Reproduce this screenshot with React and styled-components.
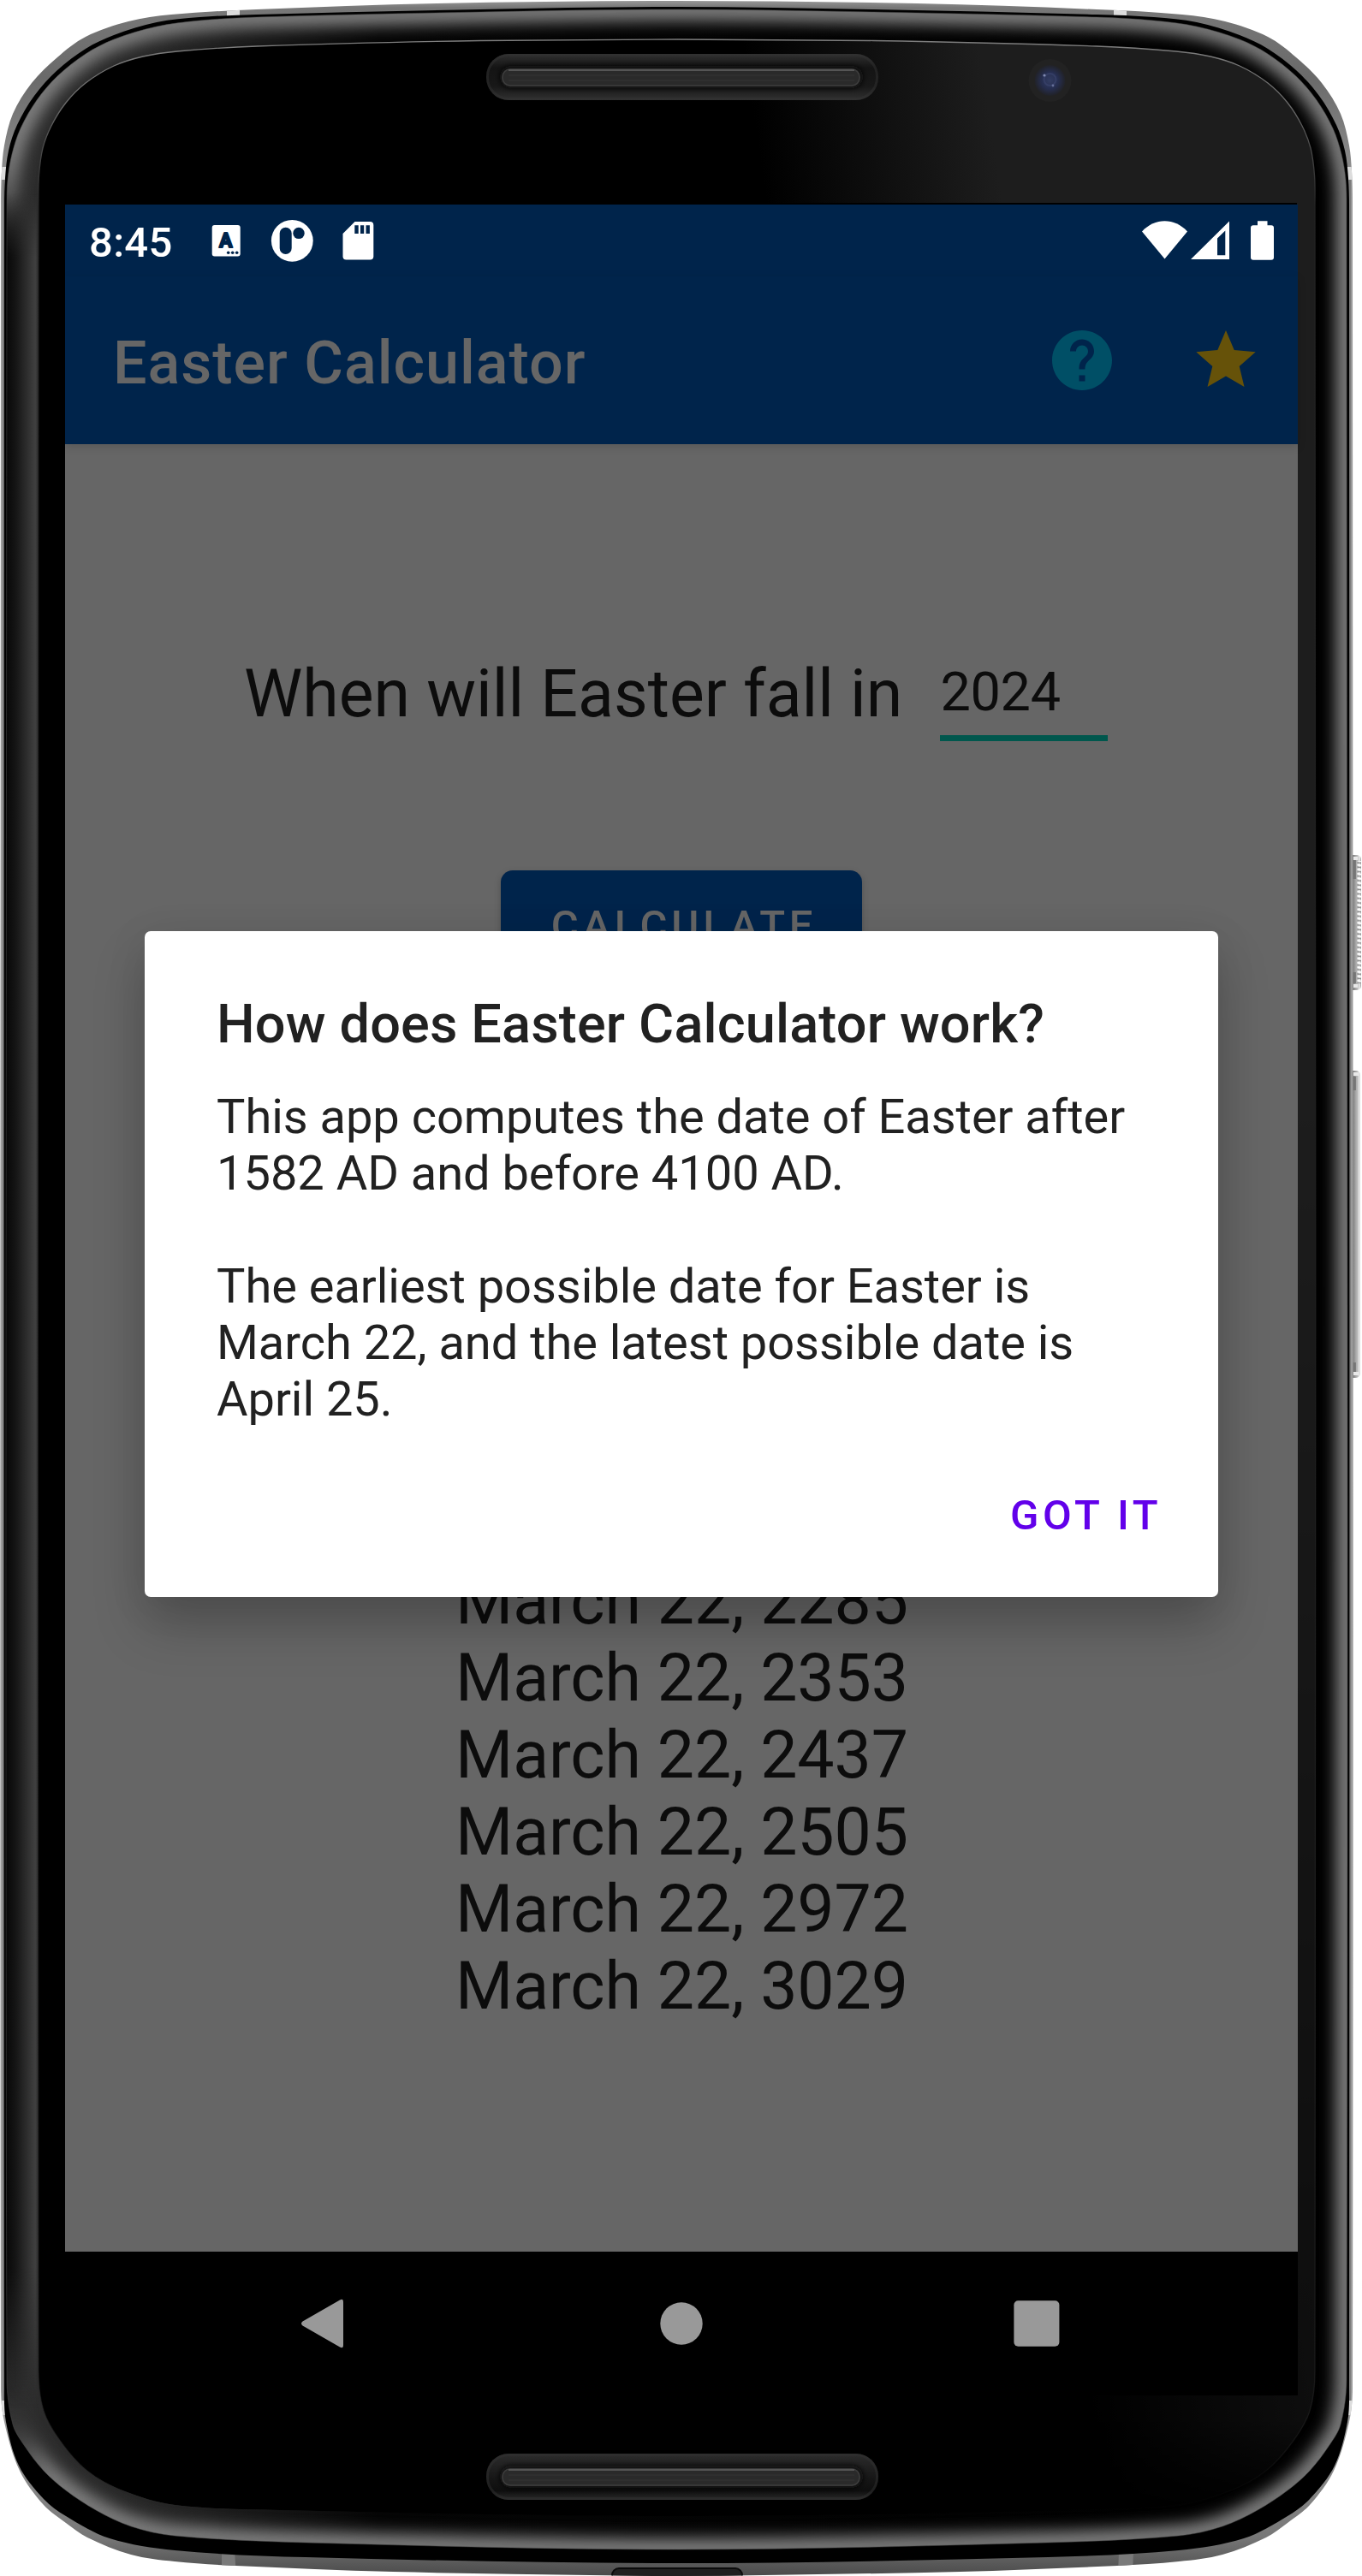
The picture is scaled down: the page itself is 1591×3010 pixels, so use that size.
import React from "react";
import styled, { createGlobalStyle } from "styled-components";

const GlobalStyle = createGlobalStyle`
  html, body { margin: 0; padding: 0; background: #fff; overflow: hidden; }
  * { box-sizing: border-box; }
`;

const Device = styled.div`
  position: relative;
  width: 1591px;
  height: 3010px;
  padding: 239px 75px 211px 76px;
  overflow: hidden;
  font-family: Roboto, "Liberation Sans", sans-serif;
`;

const Casing = styled.svg`
  position: absolute;
  inset: 0;
  display: block;
`;

const Screen = styled.div`
  position: relative;
  width: 1440px;
  height: 2560px;
  display: flex;
  flex-direction: column;
  background: #666;
`;

const StatusBar = styled.header`
  height: 84px;
  flex: none;
  display: flex;
  align-items: center;
  justify-content: space-between;
  background: #00244b;
  padding: 0 28px 0 27px;
`;

const StatusGroup = styled.div`
  display: flex;
  align-items: center;
  height: 84px;
`;

const Clock = styled.time`
  width: 144px;
  padding: 5px 0 0 1px;
  font-size: 49px;
  font-weight: 500;
  line-height: 58px;
  letter-spacing: 0.3px;
  color: #fff;
`;

const StatusIcon = styled.svg`
  display: block;
  flex: none;
  margin-left: ${(p) => p.$gap || 0}px;
`;

const AppBar = styled.div`
  height: 196px;
  flex: none;
  display: flex;
  align-items: center;
  justify-content: space-between;
  padding: 0 42px 0 56px;
  background: #00244b;
  box-shadow: 0 3px 10px rgba(0, 0, 0, 0.14);
`;

const AppTitle = styled.h1`
  margin: 0;
  padding-top: 5px;
  font-size: 70px;
  font-weight: 500;
  line-height: 82px;
  letter-spacing: 1px;
  color: #666;
`;

const Actions = styled.div`
  display: flex;
  gap: 84px;
`;

const ActionIcon = styled.svg`
  display: block;
  width: 84px;
  height: 84px;
  fill: ${(p) => p.$color};
`;

const Content = styled.main`
  flex: 1;
  display: flex;
  flex-direction: column;
  align-items: center;
  min-height: 0;
`;

const Question = styled.div`
  align-self: flex-start;
  display: flex;
  align-items: flex-start;
  gap: 44px;
  margin: 246px 0 0 209px;
`;

const Prompt = styled.span`
  padding-top: 1px;
  font-size: 77px;
  line-height: 90px;
  color: #0c0c0c;
  white-space: nowrap;
`;

const YearField = styled.span`
  display: block;
  width: 196px;
  height: 101px;
  padding-top: 7px;
  border-bottom: 7px solid #00574d;
  font-size: 63px;
  line-height: 74px;
  letter-spacing: -0.3px;
  color: #0c0c0c;
`;

const CalculateButton = styled.button`
  width: 422px;
  height: 126px;
  flex: none;
  margin-top: 151px;
  padding: 3px 0 0 6px;
  border: 0;
  border-radius: 14px;
  background: #00244b;
  box-shadow: 0 3px 8px rgba(0, 0, 0, 0.2);
  color: #666;
  font: 500 49px/58px Roboto, sans-serif;
  letter-spacing: 4.8px;
`;

const Dates = styled.ol`
  list-style: none;
  margin: 683px 0 0;
  padding: 0 0 0 1px;
  font-size: 77px;
  line-height: 90px;
  letter-spacing: -0.1px;
  color: #0c0c0c;
  text-align: center;
`;

const NavBar = styled.nav`
  height: 168px;
  flex: none;
  display: flex;
  align-items: center;
  justify-content: center;
  background: #000;
`;

const NavButton = styled.div`
  width: 415px;
  display: flex;
  justify-content: center;
`;

const NavIcon = styled.svg`
  display: block;
  width: 84px;
  height: 84px;
  fill: #999;
`;

const Dialog = styled.section`
  position: absolute;
  left: 93px;
  top: 849px;
  width: 1254px;
  height: 778px;
  display: flex;
  flex-direction: column;
  padding: 72px 66px 0 84px;
  border-radius: 7px;
  background: #fff;
  box-shadow: 0 34px 60px rgba(0, 0, 0, 0.22), 0 8px 50px rgba(0, 0, 0, 0.08);
  color: #212121;
`;

const DialogTitle = styled.h2`
  margin: 0;
  font-size: 63px;
  font-weight: 500;
  line-height: 74px;
  letter-spacing: 0.16px;
`;

const DialogText = styled.div`
  margin-top: 38px;
`;

const DialogBody = styled.p`
  margin: 0 0 66px;
  font-size: 56px;
  line-height: 66px;
  letter-spacing: -0.03px;
  white-space: nowrap;
`;

const DialogAction = styled.button`
  align-self: flex-end;
  margin: 8px 0 0;
  padding: 0;
  border: 0;
  background: none;
  color: #6200ea;
  font: 500 49px/58px Roboto, sans-serif;
  letter-spacing: 4.5px;
`;

const WIDTH = 1581;

const outline = (half) => {
  const right = half.slice(1, -1).map(([x, y]) => [WIDTH - x, y]).reverse();
  const pts = [...half, ...right];
  const n = pts.length;
  const dir = (i) => {
    const a = pts[(i + n - 1) % n];
    const b = pts[(i + 1) % n];
    const l = Math.hypot(b[0] - a[0], b[1] - a[1]);
    return [(b[0] - a[0]) / l, (b[1] - a[1]) / l];
  };
  let d = `M${pts[0][0]} ${pts[0][1]}`;
  for (let i = 0; i < n; i++) {
    const p = pts[i];
    const q = pts[(i + 1) % n];
    const len = Math.hypot(q[0] - p[0], q[1] - p[1]) / 3;
    const u = dir(i);
    const v = dir((i + 1) % n);
    d += `C${(p[0] + u[0] * len).toFixed(1)} ${(p[1] + u[1] * len).toFixed(1)} ${(q[0] - v[0] * len).toFixed(1)} ${(q[1] - v[1] * len).toFixed(1)} ${q[0]} ${q[1]}`;
  }
  return d + "Z";
};

const RIM = outline([
  [790.5, 1], [510, 4], [300, 11], [200, 17], [150, 25], [100, 43], [67, 67], [37, 97], [15, 133], [5, 170], [2, 200], [1, 240],
  [1, 2790], [5, 2830], [23, 2887], [51, 2927], [77, 2948], [102, 2965], [153, 2985], [204, 2993], [276, 2998], [459, 3005], [689, 3009], [790.5, 3010],
]);
const SEAM = outline([
  [790.5, 8], [561, 11], [300, 17], [233, 20], [183, 26], [133, 41], [100, 57], [67, 82], [40, 112], [20, 146], [10, 176], [6, 208], [5, 240],
  [5, 2790], [7, 2830], [22, 2881], [51, 2920], [77, 2940], [128, 2966], [204, 2980], [357, 2988], [790.5, 2995],
]);
const BEZEL = outline([
  [790.5, 11], [561, 14], [300, 20], [233, 24], [183, 31], [133, 46], [100, 63], [67, 89], [43, 117], [24, 150], [14, 180], [9, 210], [8, 240],
  [8, 2780], [15, 2833], [28, 2857], [51, 2887], [77, 2910], [112, 2933], [153, 2952], [204, 2963], [357, 2971], [790.5, 2979],
]);
const GLASS = outline([
  [790.5, 46], [561, 47.5], [300, 54], [207, 60], [167, 66], [133, 77], [100, 97], [77, 120], [60, 147], [50, 173], [45.5, 205], [45, 240],
  [45, 2770], [51, 2817], [71, 2853], [102, 2887], [143, 2910], [204, 2927], [327, 2933], [790.5, 2940],
]);

function Speaker({ y, flip }) {
  return (
    <g transform={`translate(568 ${y})`}>
      <rect width="458" height="54" rx="26" fill={flip ? "url(#grilleLow)" : "url(#grille)"} />
      <rect x="1.5" y="1.5" width="455" height="51" rx="25" fill="none" stroke="#333" strokeWidth="3" opacity=".45" />
      <rect x="16" y="14" width="424" height="26" rx="13" fill="#0c0c0c" filter="url(#soft3)" />
      <rect x="18" y="17" width="419" height="21" rx="10" fill="#2a2a2a" />
      <rect x="19" y="18" width="417" height="19" rx="9" fill="none" stroke="#3c3c3c" strokeWidth="1.5" />
      <path d="M26 19H430" stroke="#555" strokeWidth="2" />
      <path d="M26 25H430M26 31H430" stroke="#343434" strokeWidth="1" />
    </g>
  );
}

function PhoneCasing() {
  return (
    <Casing width="1591" height="3010" viewBox="0 0 1591 3010" aria-hidden="true">
      <defs>
        <linearGradient id="rim" gradientUnits="userSpaceOnUse" x1="0" y1="0" x2="0" y2="3010">
          <stop offset="0" stopColor="#9a9a9a" />
          <stop offset=".003" stopColor="#777" />
          <stop offset=".03" stopColor="#6a6a6a" />
          <stop offset=".08" stopColor="#9a9a9a" />
          <stop offset=".94" stopColor="#9a9a9a" />
          <stop offset=".985" stopColor="#777" />
          <stop offset="1" stopColor="#4a4a4a" />
        </linearGradient>
        <linearGradient id="bezelBase" gradientUnits="userSpaceOnUse" x1="0" y1="0" x2="1581" y2="0">
          <stop offset="0" stopColor="#2e2e2e" />
          <stop offset=".12" stopColor="#262626" />
          <stop offset=".28" stopColor="#050505" />
          <stop offset="1" stopColor="#000" />
        </linearGradient>
        <linearGradient id="leftWall" gradientUnits="userSpaceOnUse" x1="8" y1="0" x2="45" y2="0">
          <stop offset="0" stopColor="#080808" />
          <stop offset=".3" stopColor="#161616" />
          <stop offset=".9" stopColor="#404040" />
          <stop offset="1" stopColor="#2c2c2c" />
        </linearGradient>
        <linearGradient id="wallFade" gradientUnits="userSpaceOnUse" x1="0" y1="0" x2="0" y2="3010">
          <stop offset=".075" stopColor="#000" />
          <stop offset=".1" stopColor="#fff" />
          <stop offset=".88" stopColor="#fff" />
          <stop offset=".935" stopColor="#000" />
        </linearGradient>
        <linearGradient id="glossX" gradientUnits="userSpaceOnUse" x1="860" y1="0" x2="1130" y2="-40">
          <stop offset="0" stopColor="#1d1d1d" stopOpacity="0" />
          <stop offset="1" stopColor="#1d1d1d" />
        </linearGradient>
        <linearGradient id="glossFade" gradientUnits="userSpaceOnUse" x1="0" y1="0" x2="0" y2="3010">
          <stop offset="0" stopColor="#fff" />
          <stop offset=".42" stopColor="#fff" />
          <stop offset=".85" stopColor="#888" />
          <stop offset=".94" stopColor="#808080" />
          <stop offset=".975" stopColor="#000" />
        </linearGradient>
        <linearGradient id="edgeFade" gradientUnits="userSpaceOnUse" x1="0" y1="0" x2="0" y2="3010">
          <stop offset="0" stopColor="#8a8a8a" />
          <stop offset=".04" stopColor="#6a6a6a" />
          <stop offset=".08" stopColor="#222" />
          <stop offset=".94" stopColor="#222" stopOpacity=".6" />
          <stop offset=".975" stopColor="#222" stopOpacity="0" />
        </linearGradient>
        <linearGradient id="grille" x1="0" y1="0" x2="0" y2="1">
          <stop offset="0" stopColor="#303030" />
          <stop offset=".3" stopColor="#141414" />
          <stop offset=".7" stopColor="#181818" />
          <stop offset="1" stopColor="#303030" />
        </linearGradient>
        <linearGradient id="grilleLow" x1="0" y1="0" x2="0" y2="1">
          <stop offset="0" stopColor="#2c2c2c" />
          <stop offset=".6" stopColor="#141414" />
          <stop offset=".8" stopColor="#0e0e0e" />
          <stop offset="1" stopColor="#2a2a2a" />
        </linearGradient>
        <linearGradient id="sideKey" gradientUnits="userSpaceOnUse" x1="1580" y1="0" x2="1590" y2="0">
          <stop offset="0" stopColor="#767676" />
          <stop offset=".35" stopColor="#a4a4a4" />
          <stop offset=".6" stopColor="#bdbdbd" />
          <stop offset=".8" stopColor="#f0f0f0" />
          <stop offset="1" stopColor="#a0a0a0" />
        </linearGradient>
        <radialGradient id="lens">
          <stop offset="0" stopColor="#333d63" />
          <stop offset=".55" stopColor="#262e50" />
          <stop offset="1" stopColor="#212227" />
        </radialGradient>
        <pattern id="knurl" width="10" height="5.2" patternUnits="userSpaceOnUse">
          <path d="M0 1L10 2.5" stroke="#fff" strokeWidth="2" />
          <path d="M0 3.6L10 5" stroke="#8c8c8c" strokeWidth="1.4" />
        </pattern>
        <filter id="soft" filterUnits="userSpaceOnUse" x="-40" y="-40" width="1680" height="3100">
          <feGaussianBlur stdDeviation="9" />
        </filter>
        <filter id="soft3" filterUnits="userSpaceOnUse" x="-20" y="-20" width="500" height="100">
          <feGaussianBlur stdDeviation="3" />
        </filter>
        <filter id="softMask" filterUnits="userSpaceOnUse" x="-200" y="-100" width="1900" height="3200">
          <feGaussianBlur stdDeviation="14 34" />
        </filter>
        <clipPath id="bezelClip"><path d={BEZEL} /></clipPath>
        <clipPath id="rimClip"><path d={RIM} /></clipPath>
        <clipPath id="glassClip"><path d={GLASS} /></clipPath>
        <mask id="noLeft" maskUnits="userSpaceOnUse" x="0" y="0" width="1591" height="3010">
          <rect width="1591" height="3010" fill="#fff" />
          <rect x="-100" y="230" width="150" height="2640" fill="#000" filter="url(#softMask)" />
        </mask>
        <mask id="wallMask" maskUnits="userSpaceOnUse" x="0" y="0" width="60" height="3010">
          <rect width="60" height="3010" fill="url(#wallFade)" />
        </mask>
        <mask id="glossMask" maskUnits="userSpaceOnUse" x="0" y="0" width="1591" height="3010">
          <rect width="1591" height="3010" fill="url(#glossFade)" />
        </mask>
      </defs>

      <g>
        <rect x="1575" y="999" width="15" height="158" rx="5" fill="url(#sideKey)" />
        <rect x="1585.5" y="1006" width="4.500" height="144" fill="url(#knurl)" />
        <rect x="1575" y="1251" width="14" height="359" rx="5" fill="url(#sideKey)" />
        <path d="M1581 1001h5v4h-5zM1581 1150h5v4h-5zM1581 1253h6v4h-6zM1581 1603h6v4h-6z" fill="#e8e8e8" />
        <path d="M1580 1005h4v22h-4zM1580 1136h4v13h-4zM1580 1258h4v16h-4zM1580 1592h4v11h-4z" fill="#6a6a6a" opacity=".7" />
      </g>

      <path d={RIM} fill="url(#rim)" />
      <g clipPath="url(#rimClip)">
        <path d="M4 210V2805M1577 210V2805" stroke="#7c7c7c" strokeWidth="2" />
        <path d="M265 0h15v26h-15zM1301 0h15v26h-15zM0 195h8v15H0zM1573 195h8v15h-8zM0 2805h8v17H0zM1573 2805h8v17h-8z" fill="#dcdcdc" />
        <path d="M259 2980h15l2 30h-17zM1307 2980h17l-1 30h-17z" fill="#7a7a7a" />
        <rect x="715" y="3001" width="152" height="20" rx="8" fill="#202020" stroke="#0a0a0a" strokeWidth="2" />
      </g>
      <path d={SEAM} fill="#000" />

      <path d={BEZEL} fill="url(#bezelBase)" />
      <g clipPath="url(#bezelClip)">
        <g mask="url(#noLeft)">
          <path d={BEZEL} fill="none" stroke="#808080" strokeWidth="26" filter="url(#soft)" />
        </g>
        <rect x="6" y="200" width="40" height="2650" fill="url(#leftWall)" mask="url(#wallMask)" />
      </g>
      <path d={BEZEL} fill="none" stroke="#4a4a4a" strokeWidth="1" opacity=".5" />

      <g clipPath="url(#glassClip)">
        <path d={GLASS} fill="#000" />
        <rect x="780" y="0" width="811" height="3010" fill="url(#glossX)" mask="url(#glossMask)" />
      </g>
      <path d={GLASS} fill="none" stroke="url(#edgeFade)" strokeWidth="1.3" />

      <Speaker y={63} />
      <Speaker y={2867} flip />

      <g>
        <circle cx="1226.5" cy="94" r="25" fill="#222" />
        <circle cx="1226.5" cy="94" r="18" fill="url(#lens)" />
        <circle cx="1226.5" cy="93" r="7" fill="none" stroke="#46507c" strokeWidth="2" opacity=".4" />
        <circle cx="1220" cy="88" r="1.6" fill="#8089b0" />
        <circle cx="1230" cy="100" r="1.4" fill="#656f98" />
      </g>
      <path d="M791 238H1515" stroke="#000" strokeWidth="2" />
    </Casing>
  );
}

function KeyboardIcon() {
  return (
    <StatusIcon width="34" height="84" viewBox="0 0 34 84">
      <rect x=".7" y="24" width="33" height="36.5" rx="3" fill="#fff" />
      <text x="16.7" y="50" textAnchor="middle" fontFamily="Roboto" fontWeight="700" fontSize="23" fill="#00244b" stroke="#00244b" strokeWidth="2" strokeLinejoin="round">A</text>
      <g fill="#00244b">
        <circle cx="19.7" cy="56.3" r="1.8" />
        <circle cx="24.7" cy="56.3" r="1.8" />
        <circle cx="29.7" cy="56.3" r="1.8" />
      </g>
    </StatusIcon>
  );
}

function BadgeIcon() {
  return (
    <StatusIcon $gap={35} width="50" height="84" viewBox="316 239 50 84">
      <circle cx="341.3" cy="281.3" r="24.4" fill="#fff" />
      <rect x="326.7" y="265.7" width="14" height="31.3" rx="7" fill="#00244b" />
      <circle cx="349" cy="272.4" r="6.7" fill="#00244b" />
    </StatusIcon>
  );
}

function CardIcon() {
  return (
    <StatusIcon $gap={34} width="37" height="84" viewBox="400 239 37 84">
      <path d="M414.5 259H432.3a4 4 0 0 1 4 4V299.5a4 4 0 0 1-4 4H404.5a4 4 0 0 1-4-4V273z" fill="#fff" />
      <path d="M414.3 263.3h4.4v9.7h-4.4zM421 263.3h4.2v9.7H421zM427.5 263.3h4.4v9.7h-4.4z" fill="#00244b" />
    </StatusIcon>
  );
}

function SystemIcons() {
  return (
    <StatusIcon width="154" height="84" viewBox="1334 239 154 84" fill="#fff">
      <path d="M1334 270.5C1349 254.2 1372 254.2 1387 270.5L1360.5 302.5z" />
      <path fillRule="evenodd" d="M1391 303L1436 258.5V303zM1422 298.3h9.3V269.5L1422 278.5z" />
      <path d="M1469 258.3h11.5v5H1485a3 3 0 0 1 3 3v34.5a3 3 0 0 1-3 3h-21a3 3 0 0 1-3-3v-34.5a3 3 0 0 1 3-3h5z" />
    </StatusIcon>
  );
}

const dates = ["March 22, 2285", "March 22, 2353", "March 22, 2437", "March 22, 2505", "March 22, 2972", "March 22, 3029"];

export default function App() {
  return (
    <>
      <GlobalStyle />
      <Device>
        <PhoneCasing />
        <Screen>
          <StatusBar>
            <StatusGroup>
              <Clock>8:45</Clock>
              <KeyboardIcon />
              <BadgeIcon />
              <CardIcon />
            </StatusGroup>
            <SystemIcons />
          </StatusBar>
          <AppBar>
            <AppTitle>Easter Calculator</AppTitle>
            <Actions>
              <ActionIcon $color="#004f66" viewBox="0 0 24 24">
                <path d="M12 2C6.48 2 2 6.48 2 12s4.48 10 10 10 10-4.48 10-10S17.52 2 12 2zm1 17h-2v-2h2v2zm2.07-7.75l-.9.92C13.45 12.9 13 13.5 13 15h-2v-.5c0-1.1.45-2.1 1.17-2.83l1.24-1.26c.37-.36.59-.86.59-1.41 0-1.1-.9-2-2-2s-2 .9-2 2H8c0-2.21 1.79-4 4-4s4 1.79 4 4c0 .88-.36 1.68-.93 2.25z" />
              </ActionIcon>
              <ActionIcon $color="#665209" viewBox="1390 379 84 84">
                <path d="M1432 386L1441.7 409L1466.7 411.3L1447.7 428L1453.5 452L1432 439.5L1410.5 452L1416.3 428L1397.3 411.3L1422.3 409z" />
              </ActionIcon>
            </Actions>
          </AppBar>
          <Content>
            <Question>
              <Prompt>When will Easter fall in</Prompt>
              <YearField>2024</YearField>
            </Question>
            <CalculateButton>CALCULATE</CalculateButton>
            <Dates>
              {dates.map((d) => <li key={d}>{d}</li>)}
            </Dates>
          </Content>
          <NavBar>
            <NavButton>
              <NavIcon viewBox="339 2673 84 84">
                <path d="M397 2687.5Q401 2685 401 2690V2740Q401 2745 397 2742.5L353.5 2717.5Q350.5 2715 353.5 2712.5z" />
              </NavIcon>
            </NavButton>
            <NavButton>
              <NavIcon viewBox="0 0 84 84"><circle cx="42" cy="42" r="24.7" /></NavIcon>
            </NavButton>
            <NavButton>
              <NavIcon viewBox="0 0 84 84"><rect x="15.4" y="15.2" width="53" height="53.5" rx="5" /></NavIcon>
            </NavButton>
          </NavBar>
          <Dialog role="dialog">
            <DialogTitle>How does Easter Calculator work?</DialogTitle>
            <DialogText>
              <DialogBody>This app computes the date of Easter after<br />1582 AD and before 4100 AD.</DialogBody>
              <DialogBody>The earliest possible date for Easter is<br />March 22, and the latest possible date is<br />April 25.</DialogBody>
            </DialogText>
            <DialogAction>GOT IT</DialogAction>
          </Dialog>
        </Screen>
      </Device>
    </>
  );
}
